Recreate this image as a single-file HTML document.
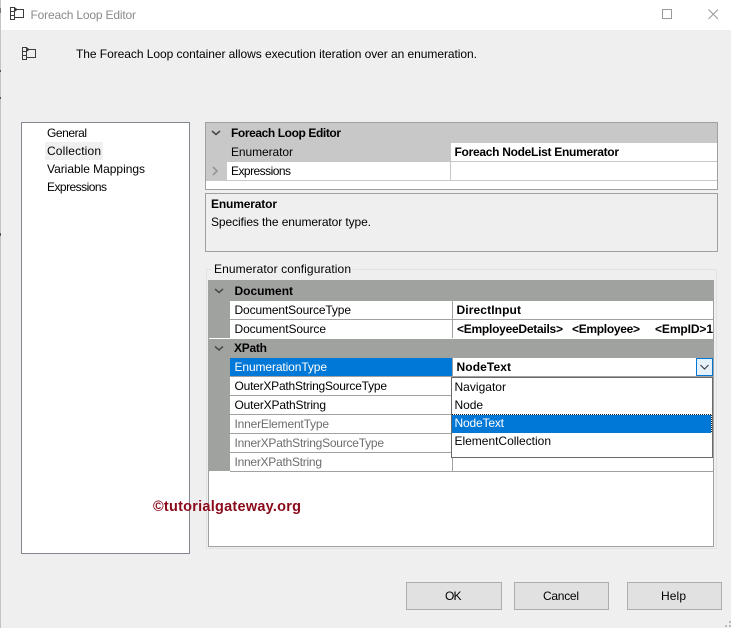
<!DOCTYPE html>
<html lang="en"><head><meta charset="utf-8"><title>Foreach Loop Editor</title>
<style>
html,body{margin:0;padding:0;background:#f0eff0;width:731px;height:628px;overflow:hidden}
svg{display:block;position:absolute;left:0;top:0}
text{font-family:"Liberation Sans",sans-serif;font-size:12px;fill:#000}
.b{font-weight:bold}
.g{fill:#6d6d6d}
.w{fill:#fff}
rect{shape-rendering:crispEdges}
</style></head><body>
<svg width="731" height="628" viewBox="0 0 731 628" xmlns="http://www.w3.org/2000/svg">
<rect width="731" height="628" fill="#f0eff0"/>
<!-- title bar -->
<rect width="731" height="30" fill="#fff"/>
<rect x="0" y="0" width="1" height="628" fill="#c4c4c4"/>
<rect x="0" y="8" width="1" height="5" fill="#777"/>
<rect x="0" y="70" width="1" height="2" fill="#555"/>
<rect x="0" y="97" width="1" height="2" fill="#555"/>
<rect x="0" y="233" width="1" height="3" fill="#555"/>
<g fill="none" stroke="#3c3c3c" stroke-width="1" shape-rendering="crispEdges">
<rect x="10.500" y="7.500" width="4" height="12"/><path d="M10.500 11.500h4M10.500 15.500h4M14.500 9.500h9v8h-9"/>
<rect x="22.500" y="47.500" width="4" height="12"/><path d="M22.500 51.500h4M22.500 55.500h4M26.500 49.500h9v8h-9"/>
</g>
<path d="M15 7.500l3 2-3 2zM27 47.500l3 2-3 2z" fill="#3c3c3c"/>
<text x="30.500" y="19" textLength="105.500" style="fill:#8a8a8a">Foreach Loop Editor</text>
<rect x="662.500" y="9.500" width="9" height="9" fill="none" stroke="#999"/>
<path d="M708.500 9.500l9.500 9.500M718 9.500l-9.500 9.500" stroke="#999" fill="none"/>
<text x="76" y="58" textLength="401">The Foreach Loop container allows execution iteration over an enumeration.</text>

<!-- left list -->
<rect x="21.500" y="122.500" width="168" height="431" fill="#fff" stroke="#828790"/>
<rect x="45" y="142" width="58" height="18" fill="#f0f0f0"/>
<text x="47" y="137" textLength="40">General</text>
<text x="47" y="155" textLength="54">Collection</text>
<text x="47" y="173" textLength="98">Variable Mappings</text>
<text x="47" y="191" textLength="60">Expressions</text>

<!-- top grid -->
<rect x="205.500" y="122.500" width="512" height="67" fill="#fff" stroke="#a0a0a0"/>
<rect x="206" y="123" width="511" height="20" fill="#c8c8c8"/>
<rect x="206" y="143" width="245" height="19" fill="#c8c8c8"/>
<rect x="206" y="162" width="21" height="18" fill="#c8c8c8"/>
<rect x="227" y="161" width="490" height="1" fill="#c8c8c8"/>
<rect x="206" y="180" width="511" height="1" fill="#c8c8c8"/>
<rect x="450" y="143" width="1" height="37" fill="#c8c8c8"/>
<path d="M212 131l4 3.500 4-3.500" fill="none" stroke="#444" stroke-width="1.500"/>
<path d="M213 167l4 4-4 4" fill="none" stroke="#8f8f8f" stroke-width="1.500"/>
<text class="b" x="231" y="137" textLength="110">Foreach Loop Editor</text>
<text x="231" y="156" textLength="62">Enumerator</text>
<text x="231" y="175" textLength="60">Expressions</text>
<text class="b" x="454.500" y="156" textLength="164.500">Foreach NodeList Enumerator</text>

<!-- description -->
<rect x="205.500" y="193.500" width="512" height="58" fill="#f0eff0" stroke="#a0a0a0"/>
<text class="b" x="211" y="208" textLength="66">Enumerator</text>
<text x="211" y="226" textLength="160">Specifies the enumerator type.</text>

<!-- group box -->
<rect x="206.500" y="269.500" width="510" height="279" fill="none" stroke="#e2e2e2"/>
<rect x="212" y="264" width="141" height="10" fill="#f0eff0"/>
<text x="214" y="273" textLength="137">Enumerator configuration</text>

<!-- inner grid -->
<rect x="208.500" y="280.500" width="505" height="266" fill="#fff" stroke="#a0a0a0"/>
<rect x="208" y="280" width="506" height="21" fill="#a0a2a0"/>
<rect x="208" y="301" width="22" height="37" fill="#a0a2a0"/>
<rect x="208" y="339" width="506" height="19" fill="#a0a2a0"/>
<rect x="208" y="358" width="22" height="113" fill="#a0a2a0"/>
<rect x="230" y="358" width="222" height="18" fill="#0078d7"/>
<g fill="#a0a2a0">
<rect x="230" y="319" width="484" height="1"/>
<rect x="230" y="376" width="484" height="1"/>
<rect x="230" y="395" width="222" height="1"/>
<rect x="230" y="414" width="222" height="1"/>
<rect x="230" y="433" width="222" height="1"/>
<rect x="230" y="452" width="222" height="1"/>
<rect x="230" y="471" width="484" height="1"/>
<rect x="452" y="301" width="1" height="37"/>
<rect x="452" y="358" width="1" height="113"/>
</g>
<path d="M215 289l4 3.500 4-3.500M215 346.500l4 3.500 4-3.500" fill="none" stroke="#4a4a4a" stroke-width="1.500"/>
<text class="b" x="234.500" y="295" textLength="58.500">Document</text>
<text x="234.500" y="314" textLength="116.500">DocumentSourceType</text>
<text x="234.500" y="333" textLength="91.500">DocumentSource</text>
<text class="b" x="234" y="352" textLength="33">XPath</text>
<text class="w" x="234.500" y="371" textLength="92.500">EnumerationType</text>
<text x="234.500" y="390" textLength="152.500">OuterXPathStringSourceType</text>
<text x="234.500" y="409" textLength="91.500">OuterXPathString</text>
<text class="g" x="234.500" y="428" textLength="94.500">InnerElementType</text>
<text class="g" x="234.500" y="447" textLength="149.500">InnerXPathStringSourceType</text>
<text class="g" x="234.500" y="466" textLength="87.500">InnerXPathString</text>
<text class="b" x="456.500" y="314" textLength="64.500">DirectInput</text>
<text class="b" x="457" y="333" textLength="106">&lt;EmployeeDetails&gt;</text>
<text class="b" x="572" y="333" textLength="68">&lt;Employee&gt;</text>
<text class="b" x="655" y="333" textLength="58">&lt;EmpID&gt;1</text>
<text class="b" x="456.500" y="371" textLength="54.500">NodeText</text>

<!-- combo button -->
<rect x="696.500" y="358.500" width="16" height="17" fill="#e5f1fb" stroke="#0078d7"/>
<path d="M700.500 365l4 4 4-4" fill="none" stroke="#444" stroke-width="1.200"/>

<!-- dropdown -->
<rect x="451.500" y="377.500" width="261" height="80" fill="#fff" stroke="#696969"/>
<rect x="452" y="415" width="259" height="18" fill="#0078d7"/>
<path d="M452 414.500h259M711.500 415v18" stroke="#222" stroke-dasharray="1 1" fill="none" shape-rendering="crispEdges"/>
<text x="454.500" y="391" textLength="51.500">Navigator</text>
<text x="454.500" y="409" textLength="28.500">Node</text>
<text class="w" x="454.500" y="427" textLength="49.500">NodeText</text>
<text x="454.500" y="445" textLength="96.500">ElementCollection</text>

<!-- watermark -->
<text class="b" x="153" y="511" textLength="148" style="font-size:14.500px;fill:#8b0a1a">©tutorialgateway.org</text>

<!-- buttons -->
<rect x="406.500" y="582.500" width="95" height="27" fill="#e1e1e1" stroke="#adadad"/>
<rect x="514.500" y="582.500" width="94" height="27" fill="#e1e1e1" stroke="#adadad"/>
<rect x="627.500" y="582.500" width="94" height="27" fill="#e1e1e1" stroke="#adadad"/>
<text x="445" y="600" textLength="16.500">OK</text>
<text x="543" y="600" textLength="36">Cancel</text>
<text x="661" y="600" textLength="25">Help</text>

<!-- resize grip -->
<g fill="#b8b8b8">
<rect x="729" y="621" width="2" height="2"/><rect x="729" y="625" width="2" height="2"/><rect x="725" y="625" width="2" height="2"/>
</g>
</svg>
</body></html>
